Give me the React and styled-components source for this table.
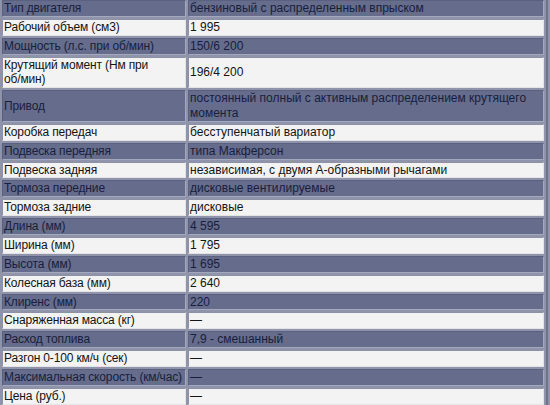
import React from "react";
import styled, { createGlobalStyle } from "styled-components";

const GlobalStyle = createGlobalStyle`
  html, body {
    margin: 0;
    padding: 0;
    background: #8f94ab;
  }
`;

const Screen = styled.div`
  width: 550px;
  height: 405px;
  overflow: hidden;
  background: #8f94ab;
`;

const Table = styled.table`
  width: 548px;
  table-layout: fixed;
  border-collapse: separate;
  border-spacing: 2.5px 2px;
  border-right: 2px solid #6e738a;
  border-bottom: 2px solid #5e6378;
  margin-top: -2px;
  font-family: "Liberation Sans", Arial, sans-serif;
  font-size: 12px;
`;

const Cell = styled.td`
  box-sizing: border-box;
  padding: 0 0 0 1px;
  line-height: 14.85px;
  vertical-align: middle;
  letter-spacing: ${(p) => (p.$label ? "-0.15px" : "0")};
  background: ${(p) => (p.$dark ? "#656c8c" : "#f3f3f3")};
  color: ${(p) => (p.$dark ? "#181e3c" : "#141414")};
  border: 1px solid;
  border-color: ${(p) =>
    p.$dark
      ? "#5a6180 #a3a8bc #a3a8bc #5a6180"
      : "#8d91a6 #e4e4e8 #e4e4e8 #8d91a6"};
`;

// keep "об/мин" and "км/час" together, as the original browser did
const glue = (s) => s.replace(/\//g, "/\u2060");

const rows = [
  ["Тип двигателя", "бензиновый с распределенным впрыском"],
  ["Рабочий объем (см3)", "1 995"],
  ["Мощность (л.с. при об/мин)", "150/6 200"],
  ["Крутящий момент (Нм при об/мин)", "196/4 200"],
  ["Привод", "постоянный полный с активным распределением крутящего момента"],
  ["Коробка передач", "бесступенчатый вариатор"],
  ["Подвеска передняя", "типа Макферсон"],
  ["Подвеска задняя", "независимая, с двумя А-образными рычагами"],
  ["Тормоза передние", "дисковые вентилируемые"],
  ["Тормоза задние", "дисковые"],
  ["Длина (мм)", "4 595"],
  ["Ширина (мм)", "1 795"],
  ["Высота (мм)", "1 695"],
  ["Колесная база (мм)", "2 640"],
  ["Клиренс (мм)", "220"],
  ["Снаряженная масса (кг)", "—"],
  ["Расход топлива", "7,9 - смешанный"],
  ["Разгон 0-100 км/ч (сек)", "—"],
  ["Максимальная скорость (км/час)", "—"],
  ["Цена (руб.)", "—"],
];

export default function App() {
  return (
    <Screen>
      <GlobalStyle />
      <Table>
        <colgroup>
          <col style={{ width: 184 }} />
          <col />
        </colgroup>
        <tbody>
          {rows.map(([name, value], i) => (
            <tr key={name}>
              <Cell $label $dark={i % 2 === 0}>{glue(name)}</Cell>
              <Cell $dark={i % 2 === 0}>{value}</Cell>
            </tr>
          ))}
        </tbody>
      </Table>
    </Screen>
  );
}
